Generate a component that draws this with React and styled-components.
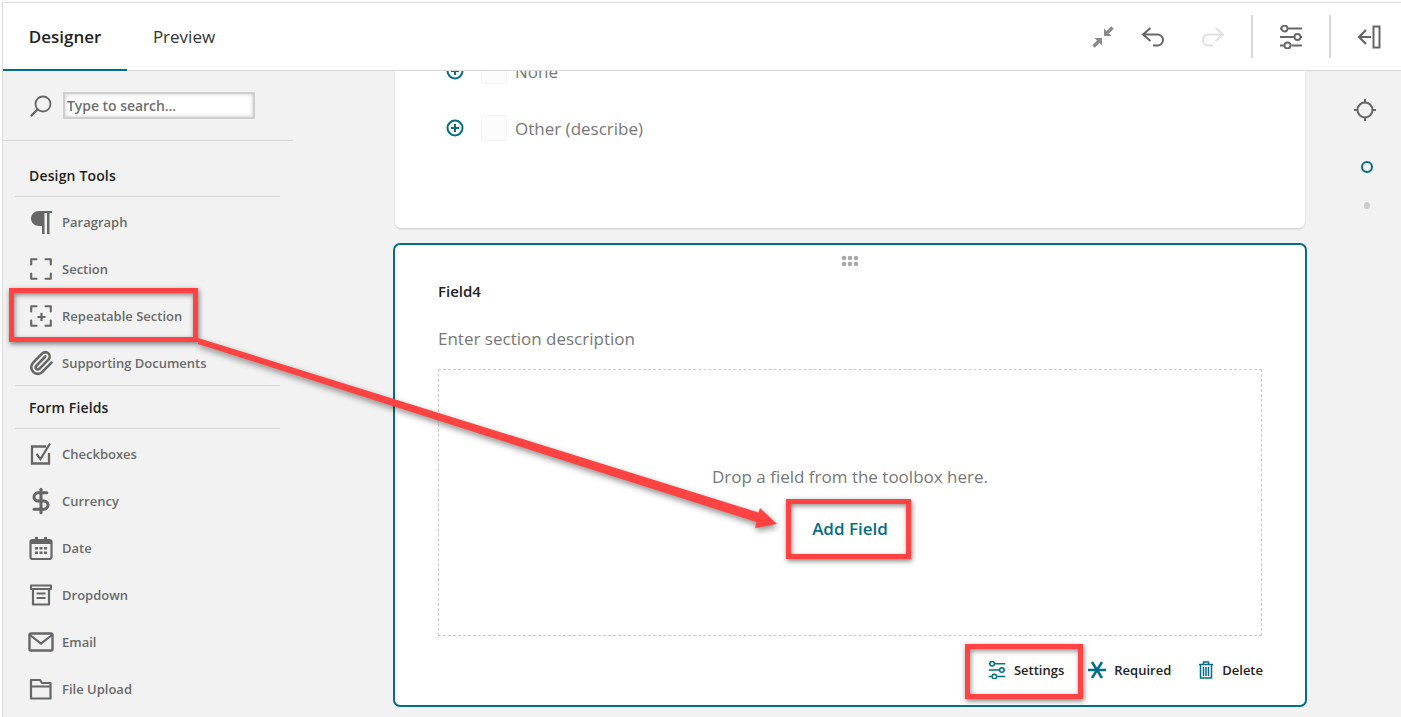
import React from 'react'
import styled, { createGlobalStyle } from 'styled-components'
import { Paperclip, DollarSign } from 'lucide-react'

const TEAL = '#006f87'
const RED = '#ff4343'

const Global = createGlobalStyle`
  html, body {
    margin: 0;
    padding: 0;
    background: #fff;
  }
  * {
    box-sizing: border-box;
  }
`

const Page = styled.div`
  position: relative;
  width: 1401px;
  height: 717px;
  padding: 2px 0 0 2px;
  overflow: hidden;
  font-family: "Open Sans", "Liberation Sans", sans-serif;
  background: #fff;
`
const Frame = styled.div`
  display: flex;
  flex-direction: column;
  height: 715px;
  border-top: 1px solid #dcdcdc;
  border-left: 1px solid #dcdcdc;
`
const Header = styled.header`
  display: flex;
  align-items: stretch;
  justify-content: space-between;
  flex: 0 0 68px;
  background: #fff;
  border-bottom: 1px solid #d8d8d8;
`
const Tabs = styled.nav`
  display: flex;
`
const Tab = styled.div`
  display: flex;
  align-items: center;
  justify-content: center;
  width: ${p => (p.$active ? '124px' : '114px')};
  padding-top: 1px;
  margin-bottom: -1px;
  font-size: 17px;
  font-weight: ${p => (p.$active ? 600 : 400)};
  color: ${p => (p.$active ? '#222' : '#333')};
  border-bottom: 2px solid ${p => (p.$active ? TEAL : 'transparent')};
`
const Tools = styled.div`
  display: flex;
  align-items: center;
  padding-right: 20px;
`
const ToolButton = styled.div`
  display: flex;
  align-items: center;
  justify-content: center;
  width: ${p => p.$w || 36}px;
  margin-left: ${p => p.$gap || 0}px;
  color: ${p => p.$color || '#666'};
`
const ToolDivider = styled.div`
  width: 2px;
  height: 43px;
  margin: 0 ${p => p.$right || 20}px 0 ${p => p.$left || 20}px;
  background: #d8d8d8;
`
const Body = styled.div`
  display: flex;
  flex: 1;
  min-height: 0;
  background: #f2f2f2;
`
const Sidebar = styled.aside`
  flex: 0 0 290px;
`
const SearchRow = styled.div`
  display: flex;
  align-items: center;
  gap: 10px;
  height: 70px;
  padding: 0 0 0 26px;
  border-bottom: 1px solid #d6d6d6;
  color: #666;
`
const SearchInput = styled.div`
  display: flex;
  align-items: center;
  width: 192px;
  height: 27px;
  padding-left: 2px;
  background: #fff;
  border: 2px solid #cfcfcf;
  box-shadow: inset 0 0 4px rgba(0, 0, 0, 0.22);
  font-size: 14px;
  font-weight: 600;
  letter-spacing: -0.05px;
  color: #6f6f6f;
`
const Group = styled.section`
  margin: 0 13px 0 12px;
`
const GroupTitle = styled.h3`
  display: flex;
  align-items: center;
  height: ${p => p.$h}px;
  margin: 0;
  padding: ${p => p.$top || 0}px 0 0 14px;
  font-size: 14px;
  font-weight: 600;
  letter-spacing: 0.15px;
  color: #222;
  border-bottom: 1px solid #d6d6d6;
`
const ItemList = styled.div`
  height: ${p => (p.$h ? `${p.$h}px` : 'auto')};
  padding-top: 1px;
  border-bottom: ${p => (p.$line ? '1px solid #d6d6d6' : 'none')};
`
const Item = styled.div`
  display: flex;
  align-items: center;
  height: 47px;
  padding-left: 14px;
  font-size: 13px;
  font-weight: 600;
  color: #6a6a6a;
`
const ItemIcon = styled.span`
  display: flex;
  align-items: center;
  justify-content: center;
  flex: 0 0 24px;
  min-width: 0;
  margin-right: 9px;
  color: #666;
  svg {
    flex-shrink: 0;
  }
`
const Canvas = styled.main`
  flex: 1;
  min-width: 0;
  padding: 0 1px 0 100px;
  overflow: hidden;
`
const QuestionCard = styled.div`
  height: 157px;
  margin: 0 2px 15px;
  padding: 0 0 0 51px;
  overflow: hidden;
  background: #fff;
  border-radius: 0 0 6px 6px;
  box-shadow: 0 1px 2px rgba(0, 0, 0, 0.16);
`
const Option = styled.div`
  display: flex;
  align-items: center;
  height: 28px;
  margin-top: ${p => p.$top}px;
  color: ${TEAL};
`
const Check = styled.span`
  width: 26px;
  height: 26px;
  margin: 0 8px 0 17px;
  background: #fcfcfc;
  border: 1px solid #f5f5f5;
  border-radius: 2px;
`
const OptionLabel = styled.span`
  font-size: 17px;
  color: #777;
`
const SectionCard = styled.section`
  position: relative;
  height: 464px;
  padding: 0 43px;
  background: #fff;
  border: 2px solid ${TEAL};
  border-radius: 7px;
`
const Grip = styled.div`
  display: flex;
  justify-content: center;
  height: 31px;
  padding-top: 10px;
  color: #a8a8a8;
`
const FieldName = styled.div`
  height: 24px;
  font-size: 15px;
  font-weight: 600;
  line-height: 30px;
  color: #222;
`
const Description = styled.div`
  height: 69px;
  padding-top: 26px;
  font-size: 17px;
  line-height: 26px;
  color: #777;
`
const DropZone = styled.div`
  display: flex;
  flex-direction: column;
  align-items: center;
  height: 267px;
  padding-top: 94px;
  border: 1px dashed #ccc;
`
const DropText = styled.div`
  font-size: 17px;
  line-height: 26px;
  color: #777;
`
const AddField = styled.div`
  margin-top: 26px;
  font-size: 17px;
  font-weight: 600;
  line-height: 26px;
  color: ${TEAL};
`
const Footer = styled.div`
  display: flex;
  justify-content: flex-end;
  align-items: center;
  height: 68px;
  margin-right: -1px;
`
const Action = styled.div`
  display: flex;
  align-items: center;
  gap: 8px;
  margin-left: ${p => p.$gap || 0}px;
  font-size: 13px;
  font-weight: 600;
  color: #222;
  svg {
    color: ${TEAL};
  }
`
const Rail = styled.aside`
  display: flex;
  flex-direction: column;
  align-items: center;
  flex: 0 0 93px;
  padding: 27px 0 0 25px;
  color: #666;
`
const RailTarget = styled.div`
  margin: 0 4px 0 0;
  height: 28px;
`
const RingDot = styled.span`
  width: 12px;
  height: 12px;
  margin-top: 35px;
  border: 2px solid ${TEAL};
  border-radius: 50%;
`
const SmallDot = styled.span`
  width: 6px;
  height: 7px;
  margin-top: 29px;
  background: #ccc;
  border-radius: 50%;
`
// red markup drawn over the screenshot
const Callout = styled.div`
  position: absolute;
  left: ${p => p.$x}px;
  top: ${p => p.$y}px;
  width: ${p => p.$w}px;
  height: ${p => p.$h}px;
  border: 5px solid ${RED};
  box-shadow: 1px 2px 5px rgba(0, 0, 0, 0.5), inset 1px 2px 5px rgba(0, 0, 0, 0.45);
`
const ArrowOverlay = styled.svg`
  position: absolute;
  left: 0;
  top: 0;
  filter: drop-shadow(1px 3px 3px rgba(0, 0, 0, 0.45));
`

const Svg = ({ size = 24, w, h, children, vb, ...rest }) => (
  <svg width={w || size} height={h || size} viewBox={vb || '0 0 24 24'} fill="none" stroke="currentColor" {...rest}>
    {children}
  </svg>
)

const SearchIcon = () => (
  <Svg>
    <circle cx="14" cy="10" r="7.500" strokeWidth="1.800" />
    <path d="M8.500 15.500 2.500 21.500" strokeWidth="2.400" strokeLinecap="round" />
  </Svg>
)
const ParagraphIcon = () => (
  <Svg>
    <path d="M23 1H10C5.500 1 2 4.500 2 8.500S5.500 16 10 16h3v8h2.500V3H18v21h2.500V3H23z" fill="currentColor" stroke="none" />
  </Svg>
)
const Corners = () => (
  <path d="M7.500 2.200H2.200V7.500M16.500 2.200h5.300V7.500M2.200 16.500v5.300H7.500M21.800 16.500v5.300H16.500" strokeWidth="2.100" strokeLinejoin="round" strokeLinecap="round" />
)
const SectionIcon = () => (
  <Svg>
    <Corners />
  </Svg>
)
const RepeatIcon = () => (
  <Svg>
    <Corners />
    <path d="M12.500 9v8M8.500 13h8" strokeWidth="2.200" />
  </Svg>
)
const CheckIcon = () => (
  <Svg>
    <path d="M20 11v10.500H3V4.500h14" strokeWidth="2.300" />
    <path d="m7.500 12 4 5L21 1.500" strokeWidth="2.200" />
  </Svg>
)
const CalendarIcon = () => (
  <Svg>
    <rect x="1.500" y="4" width="21" height="19" rx="2" strokeWidth="2.200" />
    <path d="M1.500 4h21v4h-21zM6 1h3v3H6zM15 1h3v3h-3z" fill="currentColor" stroke="none" />
    <path d="M6 11h3v2.500H6zM10.500 11h3v2.500h-3zM15 11h3v2.500h-3zM6 15.500h3V18H6zM10.500 15.500h3V18h-3zM15 15.500h3V18h-3z" fill="currentColor" stroke="none" />
  </Svg>
)
const DropdownIcon = () => (
  <Svg>
    <path d="M2 2.500h20v3.500H2z" strokeWidth="2" strokeLinejoin="round" />
    <path d="M4 6v15.500h16V6" strokeWidth="2.200" strokeLinejoin="round" />
    <path d="M7.500 10.500h9M7.500 15h9" strokeWidth="2.200" />
  </Svg>
)
const MailIcon = () => (
  <Svg w={26} h={20} vb="0 0 26 20">
    <rect x="1.500" y="1.500" width="23" height="17" rx="1.500" strokeWidth="2.400" />
    <path d="m2 3 11 8.500L24 3" strokeWidth="2.200" />
  </Svg>
)
const FolderIcon = () => (
  <Svg>
    <path d="M2 21.500V3h9l2 3h8.500v15.500z" strokeWidth="2.200" strokeLinejoin="round" />
    <path d="M2 9.500h20" strokeWidth="2" />
  </Svg>
)
const CollapseIcon = () => (
  <Svg size={22} vb="0 0 22 22">
    <path d="M12 10V2.500l7.500 7.500zM10 12v7.500L2.500 12z" fill="#8a8a8a" stroke="none" />
    <path d="M15 7l5.500-5.500M6.500 15.500 1.500 20.500" stroke="#8a8a8a" strokeWidth="3.500" />
  </Svg>
)
const UndoIcon = ({ flip }) => (
  <Svg w={24} h={20} vb="0 0 24 20" style={flip ? { transform: 'scaleX(-1)' } : undefined}>
    <path d="M9.500 1 2 7.500 9.500 14M2 7.500h14.500a5.500 5.500 0 0 1 0 11H12" strokeWidth="2" />
  </Svg>
)
const SlidersIcon = ({ size = 24, sw = 1.800 }) => (
  <Svg size={size}>
    <path d="M9 3.500h14M1 12h14.500M1 20.500h4M12.500 20.500H23M1 3.500h1.500M22 12h1" strokeWidth={sw} />
    <circle cx="5.500" cy="3.500" r="3" strokeWidth={sw} />
    <circle cx="18.500" cy="12" r="3" strokeWidth={sw} />
    <circle cx="8.500" cy="20.500" r="3" strokeWidth={sw} />
  </Svg>
)
const PanelIcon = () => (
  <Svg>
    <path d="M14 12H2.500M9 5l-7 7 7 7" strokeWidth="2.200" />
    <rect x="16.500" y="1.500" width="6" height="21" strokeWidth="2" />
  </Svg>
)
const TargetIcon = () => (
  <Svg>
    <circle cx="12" cy="12" r="7.500" strokeWidth="2" />
    <path d="M12 1v4M12 19v4M1 12h4M19 12h4" strokeWidth="2" />
  </Svg>
)
const PlusCircle = () => (
  <Svg size={18} vb="0 0 18 18">
    <circle cx="9" cy="9" r="7.500" strokeWidth="2" />
    <path d="M9 5v8M5 9h8" strokeWidth="2" />
  </Svg>
)
const GripIcon = () => (
  <svg width="18" height="12" viewBox="0 0 18 12" fill="currentColor">
    {[3, 9, 15].flatMap(x => [3, 9].map(y => <circle key={`${x}-${y}`} cx={x} cy={y} r="2.300" />))}
  </svg>
)
const AsteriskIcon = () => (
  <Svg size={18} vb="0 0 18 18">
    <path d="M0 9h18M4 1l10 16M14 1 4 17" strokeWidth="2.500" />
  </Svg>
)
const TrashIcon = () => (
  <Svg size={16} h={18} vb="0 0 16 18">
    <path d="M1 3.500h14M5.500 3V1h5v2" strokeWidth="1.600" />
    <path d="M2.500 4v13h11V4M5.500 6v9M8 6v9M10.500 6v9" strokeWidth="1.500" />
  </Svg>
)

const designTools = [
  ['Paragraph', <ParagraphIcon />],
  ['Section', <SectionIcon />],
  ['Repeatable Section', <RepeatIcon />],
  ['Supporting Documents', <Paperclip size={26} strokeWidth={2.400} />],
]
const formFields = [
  ['Checkboxes', <CheckIcon />],
  ['Currency', <DollarSign size={28} strokeWidth={2.600} />],
  ['Date', <CalendarIcon />],
  ['Dropdown', <DropdownIcon />],
  ['Email', <MailIcon />],
  ['File Upload', <FolderIcon />],
]

const ToolItems = ({ items }) =>
  items.map(([label, icon]) => (
    <Item key={label}>
      <ItemIcon>{icon}</ItemIcon>
      {label}
    </Item>
  ))

const App = () => (
  <Page>
    <Global />
    <Frame>
      <Header>
        <Tabs>
          <Tab $active>Designer</Tab>
          <Tab>Preview</Tab>
        </Tabs>
        <Tools>
          <ToolButton $w={22}><CollapseIcon /></ToolButton>
          <ToolButton $w={24} $gap={27}><UndoIcon /></ToolButton>
          <ToolButton $w={24} $gap={36} $color="#e0e0e0"><UndoIcon flip /></ToolButton>
          <ToolDivider $left={26} $right={26} />
          <ToolButton $w={24}><SlidersIcon /></ToolButton>
          <ToolDivider $left={26} $right={26} />
          <ToolButton $w={24}><PanelIcon /></ToolButton>
        </Tools>
      </Header>
      <Body>
        <Sidebar>
          <SearchRow>
            <SearchIcon />
            <SearchInput>Type to search...</SearchInput>
          </SearchRow>
          <Group>
            <GroupTitle $h={56} $top={14}>Design Tools</GroupTitle>
            <ItemList $line $h={189}><ToolItems items={designTools} /></ItemList>
            <GroupTitle $h={43}>Form Fields</GroupTitle>
            <ItemList><ToolItems items={formFields} /></ItemList>
          </Group>
        </Sidebar>
        <Canvas>
          <QuestionCard>
            <Option $top={-14}>
              <PlusCircle /><Check /><OptionLabel>None</OptionLabel>
            </Option>
            <Option $top={29}>
              <PlusCircle /><Check /><OptionLabel>Other (describe)</OptionLabel>
            </Option>
          </QuestionCard>
          <SectionCard>
            <Grip><GripIcon /></Grip>
            <FieldName>Field4</FieldName>
            <Description>Enter section description</Description>
            <DropZone>
              <DropText>Drop a field from the toolbox here.</DropText>
              <AddField>Add Field</AddField>
            </DropZone>
            <Footer>
              <Action><SlidersIcon size={18} sw={2} />Settings</Action>
              <Action $gap={24}><AsteriskIcon />Required</Action>
              <Action $gap={27}><TrashIcon />Delete</Action>
            </Footer>
          </SectionCard>
        </Canvas>
        <Rail>
          <RailTarget><TargetIcon /></RailTarget>
          <RingDot />
          <SmallDot />
        </Rail>
      </Body>
    </Frame>
    <Callout $x={9} $y={288} $w={189} $h={54} />
    <Callout $x={786} $y={499} $w={125} $h={60} />
    <Callout $x={965} $y={644} $w={118} $h={55} />
    <ArrowOverlay width="1401" height="717" viewBox="0 0 1401 717">
      <polygon fill={RED} points="198,338 758.500,512.500 760,508 777,524 755,528 756.500,522 198,344" />
    </ArrowOverlay>
  </Page>
)

export default App
